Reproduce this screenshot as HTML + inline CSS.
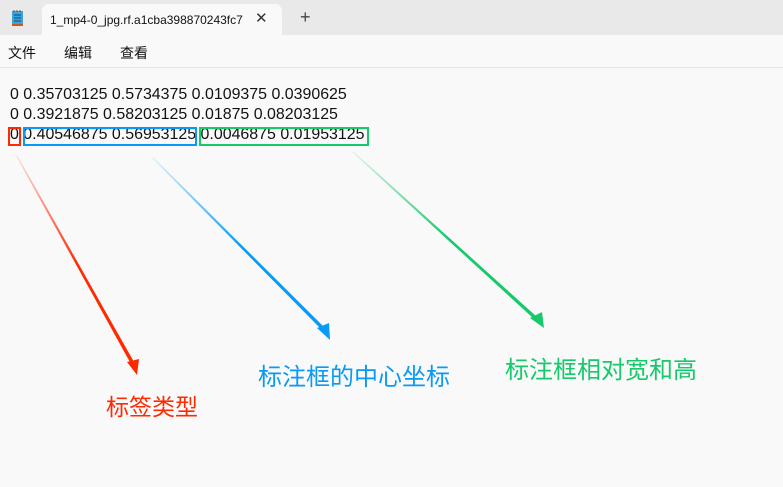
<!DOCTYPE html>
<html><head><meta charset="utf-8"><style>
body{margin:0;width:783px;height:487px;background:#f9f9f9;position:relative;overflow:hidden;font-family:"Liberation Sans","Noto Sans CJK SC",sans-serif}
.top{position:absolute;left:0;top:0;width:783px;height:35px;background:#e9e9e9}
.tab{position:absolute;left:42px;top:4px;width:240px;height:31px;background:#f9f9f9;border-radius:7px 7px 0 0;font-size:12px;color:#111;overflow:hidden}
.menu{position:absolute;top:43px;font-size:14px;color:#111}
.div{position:absolute;left:0;top:67px;width:783px;height:1px;background:#e3e3e3}
.ln{position:absolute;left:10px;font-size:15.95px;color:#111;white-space:pre;line-height:18px}
.box{position:absolute;border:2px solid;box-sizing:border-box}
.lab{position:absolute;white-space:nowrap}
</style></head><body>
<div class="top"></div>
<svg style="position:absolute;left:11px;top:9px" width="14" height="18"><rect x="1" y="2" width="11" height="15" fill="#3aa3d8"/><rect x="1" y="15" width="11" height="2" fill="#c85a20"/><path d="M3 6h7M3 9h7M3 12h7" stroke="#0b4a7a" stroke-width="1"/><path d="M3 1v2M6 1v2M9 1v2" stroke="#555"/></svg>
<div class="tab"><span style="position:absolute;left:8px;top:9px;width:194px;overflow:hidden;white-space:nowrap">1_mp4-0_jpg.rf.a1cba398870243fc7</span><span style="position:absolute;left:213px;top:5px;font-size:15px;color:#333">✕</span></div>
<div style="position:absolute;left:300px;top:7px;font-size:18px;color:#444">+</div>
<div class="menu" style="left:8px">文件</div>
<div class="menu" style="left:64px">编辑</div>
<div class="menu" style="left:120px">查看</div>
<div class="div"></div>
<div class="ln" style="top:86px">0 0.35703125 0.5734375 0.0109375 0.0390625</div>
<div class="ln" style="top:106px">0 0.3921875 0.58203125 0.01875 0.08203125</div>
<div class="ln" style="top:126px">0 0.40546875 0.56953125 0.0046875 0.01953125</div>
<div class="box" style="left:8px;top:127px;width:13px;height:19px;border-color:#ff2a00"></div>
<div class="box" style="left:23px;top:127px;width:174px;height:19px;border-color:#0a9af5"></div>
<div class="box" style="left:199px;top:127px;width:170px;height:19px;border-color:#16c96b"></div>
<svg style="position:absolute;left:0;top:0" width="783" height="487">
<defs>
<linearGradient id="r" x1="16" y1="155" x2="137" y2="375" gradientUnits="userSpaceOnUse"><stop offset="0" stop-color="#ff2a00" stop-opacity="0.1"/><stop offset="0.5" stop-color="#ff2a00"/></linearGradient>
<linearGradient id="b" x1="152" y1="158" x2="330" y2="340" gradientUnits="userSpaceOnUse"><stop offset="0" stop-color="#0a9af5" stop-opacity="0.1"/><stop offset="0.5" stop-color="#0a9af5"/></linearGradient>
<linearGradient id="g" x1="352" y1="152" x2="544" y2="328" gradientUnits="userSpaceOnUse"><stop offset="0" stop-color="#16c96b" stop-opacity="0.1"/><stop offset="0.5" stop-color="#16c96b"/></linearGradient>
</defs>
<polygon points="16,156 17,155 134,362 131,364" fill="url(#r)"/><polygon points="127,362 139,359 137,375" fill="#ff2a00"/>
<polygon points="152,158 153,157 324,327 321,329" fill="url(#b)"/><polygon points="317,328 329,323 330,340" fill="#0a9af5"/>
<polygon points="352,152 353,151 537,317 534,319" fill="url(#g)"/><polygon points="530,318 542,312 544,328" fill="#16c96b"/>
</svg>
<div class="lab" style="left:106px;top:388px;font-size:23px;color:#ff2a00">标签类型</div>
<div class="lab" style="left:258px;top:357px;font-size:24px;color:#0a9af5">标注框的中心坐标</div>
<div class="lab" style="left:505px;top:350px;font-size:24px;color:#16c96b">标注框相对宽和高</div>
</body></html>
